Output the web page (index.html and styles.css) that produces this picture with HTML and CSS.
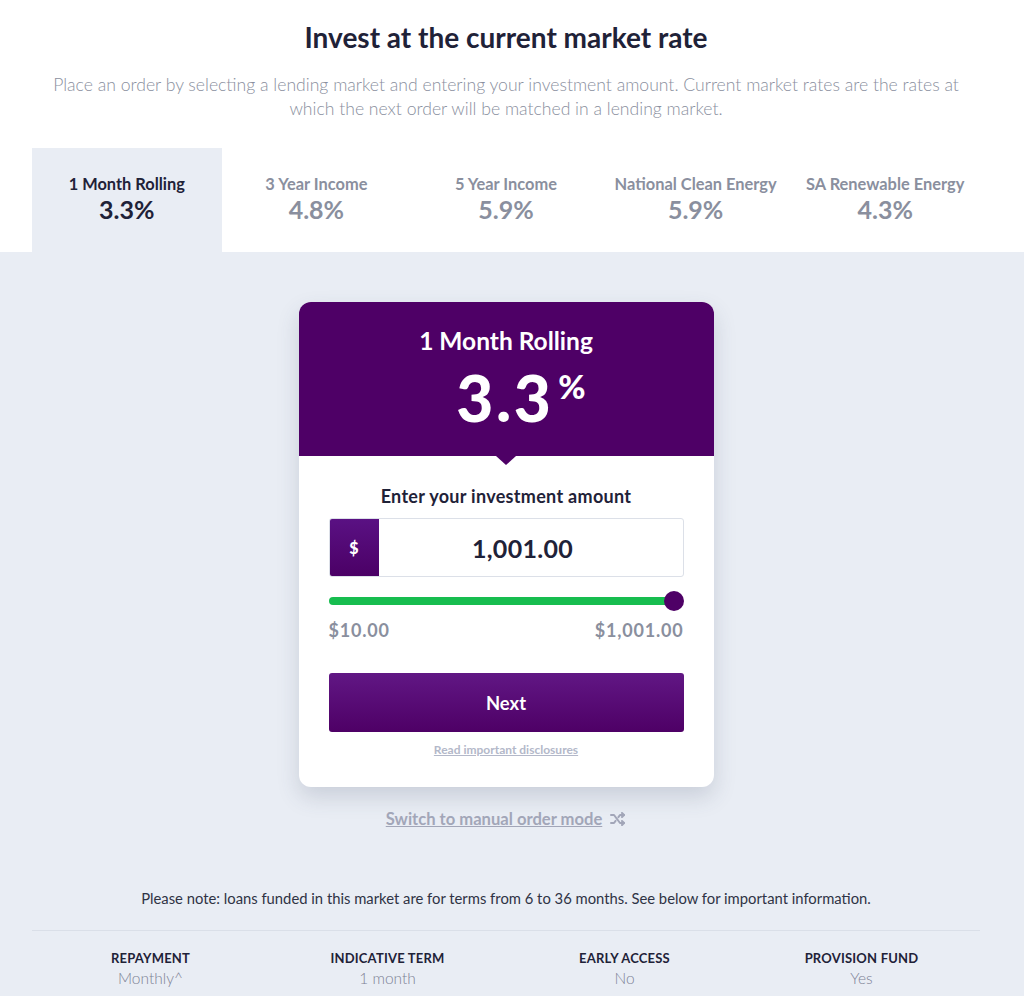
FILE: index.html
```html
<!DOCTYPE html>
<html>
<head>
<meta charset="utf-8">
<link rel="stylesheet" href="styles.css">
</head>
<body>
<div class="top">
  <div class="wrap">
    <h1 class="title">Invest at the current market rate</h1>
    <p class="lead">Place an order by selecting a lending market and entering your investment amount. Current market rates are the rates at which the next order will be matched in a lending market.</p>
    <div class="tabs">
      <div class="tab active"><div class="tab-name">1 Month Rolling</div><div class="tab-rate">3.3%</div></div>
      <div class="tab"><div class="tab-name">3 Year Income</div><div class="tab-rate">4.8%</div></div>
      <div class="tab"><div class="tab-name">5 Year Income</div><div class="tab-rate">5.9%</div></div>
      <div class="tab"><div class="tab-name">National Clean Energy</div><div class="tab-rate">5.9%</div></div>
      <div class="tab"><div class="tab-name">SA Renewable Energy</div><div class="tab-rate">4.3%</div></div>
    </div>
  </div>
</div>
<div class="main">
  <div class="wrap">
    <div class="card">
      <div class="card-head">
        <div class="card-title">1 Month Rolling</div>
        <div class="card-rate"><span class="big">3.3</span><span class="pct">%</span></div>
      </div>
      <div class="card-body">
        <div class="field-label">Enter your investment amount</div>
        <div class="amount">
          <div class="cur">$</div>
          <div class="val">1,001.00</div>
        </div>
        <div class="slider">
          <div class="track"></div>
          <div class="thumb"></div>
        </div>
        <div class="range"><span>$10.00</span><span>$1,001.00</span></div>
        <button class="next">Next</button>
        <a class="disc" href="#">Read important disclosures</a>
      </div>
    </div>
    <div class="switch">
      <a href="#">Switch to manual order mode</a>
      <svg class="shuffle" width="16" height="14" viewBox="0 0 16 14" fill="none" stroke="#a2a6b8" stroke-width="2" stroke-linecap="round" stroke-linejoin="round">
        <path d="M1 3h3l6 8h4"/><path d="M1 11h3l1.6-2.1"/><path d="M8.4 5.1L10 3h4"/><path d="M12 1l2 2-2 2"/><path d="M12 9l2 2-2 2"/>
      </svg>
    </div>
    <p class="note">Please note: loans funded in this market are for terms from 6 to 36 months. See below for important information.</p>
    <div class="facts">
      <div class="fact"><div class="fact-k">REPAYMENT</div><div class="fact-v">Monthly^</div></div>
      <div class="fact"><div class="fact-k">INDICATIVE TERM</div><div class="fact-v">1 month</div></div>
      <div class="fact"><div class="fact-k">EARLY ACCESS</div><div class="fact-v">No</div></div>
      <div class="fact"><div class="fact-k">PROVISION FUND</div><div class="fact-v">Yes</div></div>
    </div>
  </div>
</div>
</body>
</html>
```
FILE: styles.css
```css
* { box-sizing: border-box; }
html, body { margin: 0; padding: 0; }
body {
  font-family: Lato, "Noto Sans", "Liberation Sans", sans-serif;
  background: #e9edf4;
  color: #1f2238;
  width: 1024px;
  height: 996px;
  overflow: hidden;
}
.wrap { width: 1012px; }
.top { background: #fff; padding-top: 19px; }
.title {
  margin: 0;
  text-align: center;
  font-size: 28px;
  font-weight: 700;
  line-height: 36px;
  color: #1f2238;
}
.lead {
  margin: 18px auto 0;
  width: 920px;
  text-align: center;
  font-size: 17.6px;
  font-weight: 300;
  line-height: 24px;
  color: #8a8f9e;
}
.tabs {
  margin: 27px 32px 0;
  display: grid;
  grid-template-columns: repeat(5, 1fr);
  height: 104px;
}
.tab {
  display: flex;
  flex-direction: column;
  align-items: center;
  padding-top: 26px;
  color: #8a8f9e;
}
.tab.active { background: #e9edf4; color: #1f2238; }
.tab-name { font-size: 16.4px; font-weight: 700; line-height: 20px; }
.tab-rate { font-size: 25px; font-weight: 700; line-height: 30px; margin-top: 0; }

.main { padding-top: 50px; }
.card {
  width: 415px;
  margin: 0 auto;
  background: #fff;
  border-radius: 12px;
  box-shadow: 0 10px 22px rgba(60, 70, 100, 0.18);
}
.card-head {
  position: relative;
  background: #4e0066;
  border-radius: 12px 12px 0 0;
  height: 154px;
  color: #fff;
  text-align: center;
  padding-top: 24px;
}
.card-head::after {
  content: "";
  position: absolute;
  left: 50%;
  bottom: -9px;
  margin-left: -10px;
  border-left: 10px solid transparent;
  border-right: 10px solid transparent;
  border-top: 9px solid #4e0066;
}
.card-title { font-size: 24.5px; font-weight: 700; line-height: 30px; }
.card-rate {
  display: flex;
  justify-content: center;
  align-items: flex-start;
  margin-top: 9px;
  padding-left: 30px;
}
.big { font-size: 64px; font-weight: 900; line-height: 66px; letter-spacing: 2.5px; }
.pct { font-size: 33px; font-weight: 900; line-height: 30px; margin-left: 5px; margin-top: 6px; }

.card-body { padding: 28px 30px 30px; text-align: center; }
.field-label { font-size: 18px; font-weight: 700; line-height: 24px; color: #1f2238; letter-spacing: 0.3px; }
.amount {
  margin-top: 10px;
  display: flex;
  height: 59px;
  border: 1px solid #dce0e8;
  border-radius: 3px;
  overflow: hidden;
}
.cur {
  width: 49px;
  background: linear-gradient(#5a1183, #4b0066);
  color: #fff;
  font-weight: 900;
  font-size: 16px;
  display: flex;
  align-items: center;
  justify-content: center;
}
.val {
  flex: 1;
  display: flex;
  align-items: center;
  justify-content: center;
  font-size: 25px;
  font-weight: 700;
  color: #1f2238;
  letter-spacing: 0.3px;
  padding-right: 16px;
}
.slider { position: relative; height: 22px; margin-top: 13px; }
.track {
  position: absolute;
  left: 0; right: 10px; top: 7px;
  height: 8px;
  background: #17bd4f;
  border-radius: 4px;
}
.thumb {
  position: absolute;
  right: 0; top: 1px;
  width: 20px; height: 20px;
  border-radius: 50%;
  background: #4e0066;
}
.range {
  display: flex;
  justify-content: space-between;
  margin-top: 7px;
  font-size: 18px;
  font-weight: 700;
  color: #8a8f9e;
  line-height: 22px;
  letter-spacing: 0.8px;
}
.next {
  display: block;
  width: 100%;
  height: 59px;
  margin-top: 32px;
  border: 0;
  border-radius: 3px;
  background: linear-gradient(#611784, #4e0066);
  color: #fff;
  font-family: inherit;
  font-size: 18.4px;
  font-weight: 700;
}
.disc {
  display: inline-block;
  margin-top: 11px;
  font-size: 12px;
  font-weight: 700;
  color: #b3b8c9;
  line-height: 14px;
}
.switch {
  display: flex;
  justify-content: center;
  align-items: center;
  gap: 8px;
  margin-top: 22px;
  margin-left: 0;
}
.switch a { font-size: 16.6px; font-weight: 700; color: #a2a6b8; line-height: 20px; }
.note {
  margin: 59px 0 0;
  text-align: center;
  font-size: 14.8px;
  color: #2f3345;
  line-height: 20px;
}
.facts {
  margin: 22px 32px 0;
  border-top: 1px solid #dadfe8;
  display: grid;
  grid-template-columns: repeat(4, 1fr);
  padding-top: 19px;
  text-align: center;
}
.fact-k { font-size: 13px; font-weight: 700; color: #1f2238; line-height: 16px; letter-spacing: 0.2px; }
.fact-v { font-size: 15.5px; font-weight: 300; color: #7d8294; line-height: 20px; margin-top: 2px; }
```
